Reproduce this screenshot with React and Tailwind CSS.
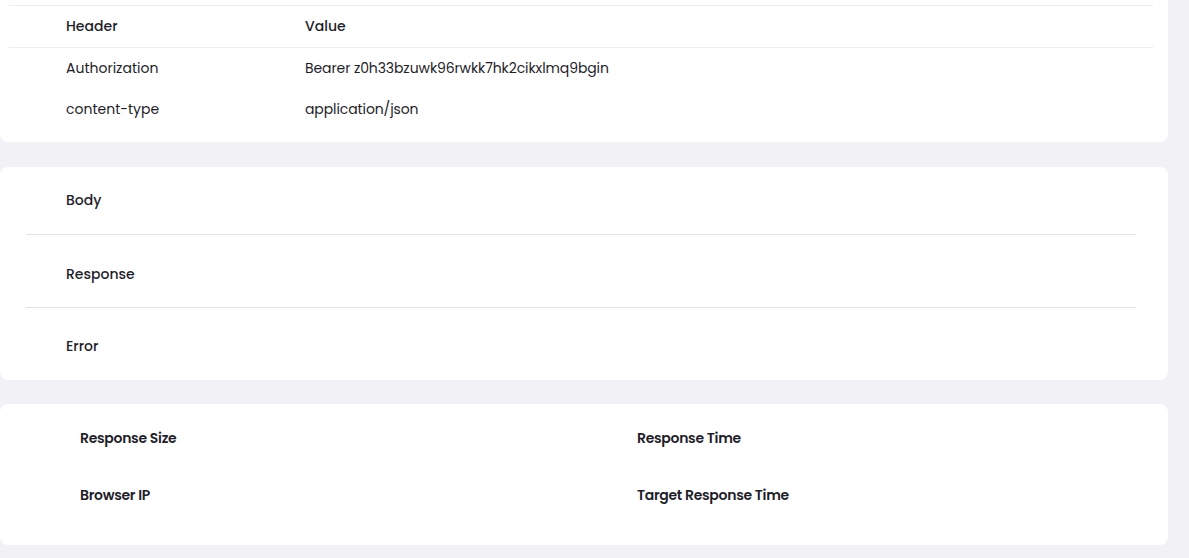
const headers = [
  { key: 'Authorization', value: 'Bearer z0h33bzuwk96rwkk7hk2cikxlmq9bgin' },
  { key: 'content-type', value: 'application/json' },
];

const sections = [
  { label: 'Body', cls: 'h-[68px] border-b border-[#e2e2e6]' },
  { label: 'Response', cls: 'h-[73px] pt-[6px] border-b border-[#e2e2e6]' },
  { label: 'Error', cls: 'h-[72px] pt-[5px]' },
];

const stats = ['Response Size', 'Response Time', 'Browser IP', 'Target Response Time'];

export default function App() {
  return (
    <div
      className="min-h-[558px] bg-[#f1f1f6] text-[14px] text-[#1e1e2a] pr-[21px] pb-[13px]"
      style={{ fontFamily: 'Poppins, "DejaVu Sans", sans-serif' }}
    >
      {/* Headers table */}
      <div className="bg-white rounded-b-lg pt-[5px] pb-[12px]">
        <div className="ml-[9px] mr-[15px] border-t border-[#ececf0]">
          <div className="flex h-[42px] items-center border-b border-[#ececf0] font-medium">
            <div className="w-[296px] pl-[57px]">Header</div>
            <div>Value</div>
          </div>
          {headers.map((h) => (
            <div key={h.key} className="flex h-[41px] items-center">
              <div className="w-[296px] pl-[57px]">{h.key}</div>
              <div className="tracking-[-0.1px]">{h.value}</div>
            </div>
          ))}
        </div>
      </div>

      {/* Collapsible sections */}
      <div className="bg-white rounded-lg mt-[25px]">
        <div className="ml-[26px] mr-[32px]">
          {sections.map((s) => (
            <div key={s.label} className={`flex items-center pl-[40px] font-medium ${s.cls}`}>
              {s.label}
            </div>
          ))}
        </div>
      </div>

      {/* Stats */}
      <div className="bg-white rounded-lg mt-[24px] pt-[20px] pb-[36px]">
        <div className="grid grid-cols-[557px_1fr] gap-y-[29px] pl-[80px] font-semibold tracking-[-0.3px]">
          {stats.map((s) => (
            <div key={s} className="h-[28px] flex items-center">{s}</div>
          ))}
        </div>
      </div>
    </div>
  );
}
